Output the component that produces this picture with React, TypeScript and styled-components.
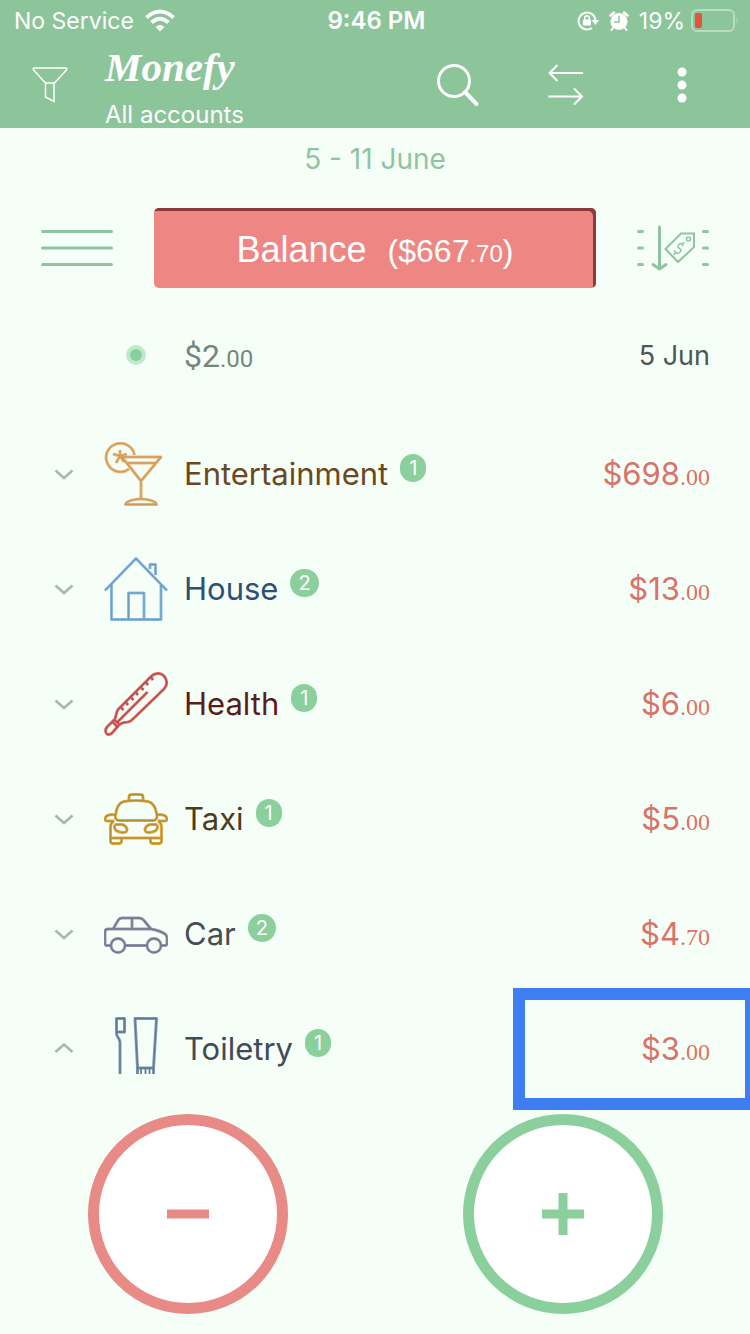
import React from "react";
import styled, { createGlobalStyle } from "styled-components";

const sans = `Inter, "Liberation Sans", sans-serif`;
const green = "#8bd09c";
const line = "#8fc4a1";
const paper = "#f5fff7";

const GlobalStyle = createGlobalStyle`
  * { box-sizing: border-box; }
  body { margin: 0; background: ${paper}; font-family: ${sans}; }
  button { padding: 0; border: 0; background: none; font: inherit; color: inherit; cursor: pointer; }
  svg { display: block; flex: none; }
`;

const Screen = styled.div`
  min-height: 100vh;
  display: flex;
  flex-direction: column;
  overflow: hidden;
`;

const Header = styled.header`
  background: #8cc59a;
  color: #fff;
`;

const StatusBar = styled.div`
  display: grid;
  grid-template-columns: 1fr auto 1fr;
  align-items: center;
  height: 41px;
  padding: 0 11px 0 14px;
  font-size: 23px;
`;

const StatusGroup = styled.div<{ $end?: boolean }>`
  display: flex;
  align-items: center;
  justify-content: ${(p) => (p.$end ? "flex-end" : "flex-start")};
  gap: 10px;
`;

const Battery = styled.div`
  display: flex;
  align-items: center;
  gap: 6px;
`;

const Clock = styled.time`
  font-size: 24px;
  font-weight: 600;
`;

const Toolbar = styled.div`
  display: flex;
  align-items: center;
  height: 87px;
  padding: 0 36px 0 26px;
`;

const ToolButton = styled.button<{ $wide?: boolean }>`
  display: flex;
  align-items: center;
  justify-content: center;
  width: ${(p) => (p.$wide ? 64 : 48)}px;
  height: 48px;
`;

const Titles = styled.div`
  flex: 1;
  padding-left: 31px;
`;

const Brand = styled.h1`
  margin: 0;
  font: italic 700 41px/60px "Liberation Serif", serif;
`;

const Account = styled.div`
  font-size: 24px;
  line-height: 36px;
`;

const Actions = styled.div`
  display: flex;
  gap: 60px;
`;

const Period = styled.h2`
  margin: 0;
  padding-top: 13px;
  font-size: 28px;
  font-weight: 400;
  line-height: 36px;
  text-align: center;
  color: ${line};
`;

const BalanceRow = styled.div`
  display: flex;
  align-items: center;
  gap: 40px;
  padding: 31px 40px 0;
`;

const BalanceButton = styled.button`
  display: flex;
  flex: 1;
  align-items: baseline;
  justify-content: center;
  gap: 21px;
  height: 80px;
  padding-top: 2px;
  border-radius: 5px;
  background: #ee8683;
  box-shadow: inset -3px 3px 0 #8c3a3b;
  color: #fff;
  font-family: "Liberation Sans", Arial, sans-serif;
  font-size: 36px;
  line-height: 80px;
`;

const BalanceAmount = styled.span`
  font-size: 32px;

  small { font-size: 24px; }
`;

const DayRow = styled.div`
  display: flex;
  align-items: center;
  height: 128px;
  padding: 6px 40px 0 126px;
  font-size: 27px;
  color: #4c5653;
`;

const Dot = styled.span`
  width: 20px;
  height: 20px;
  border: 4px solid #c0e9cb;
  border-radius: 50%;
  background: ${green};
`;

const DayAmount = styled.span`
  flex: 1;
  padding: 2px 0 0 38px;
  font-family: Roboto, sans-serif;
  font-size: 32px;
  color: #74877f;

  small { font-size: 24px; }
`;

const Categories = styled.ul`
  margin: 0;
  padding: 0;
  list-style: none;
`;

const CategoryRow = styled.li`
  position: relative;
  display: flex;
  align-items: center;
  height: 115px;
  padding: 0 40px;
`;

const Expander = styled.button`
  display: flex;
  align-items: center;
  justify-content: center;
  width: 48px;
  height: 48px;
  margin-right: 16px;
`;

const Name = styled.span<{ $color: string }>`
  padding-left: 16px;
  font-size: 31px;
  line-height: 40px;
  color: ${(p) => p.$color};
`;

const Badge = styled.span`
  min-width: 26px;
  margin: 0 auto 12px 12px;
  padding: 0 8px;
  border-radius: 14px;
  background: ${green};
  color: #fff;
  font-size: 20px;
  line-height: 28px;
  text-align: center;
`;

const Amount = styled.span`
  font-size: 31px;
  color: #d9736a;

  small { font-family: "Liberation Serif", serif; font-size: 24px; }
`;

const Highlight = styled.span`
  position: absolute;
  top: -3px;
  right: -7px;
  bottom: -4px;
  width: 244px;
  border: 12px solid #3f7df3;
  pointer-events: none;
`;

const Footer = styled.footer`
  display: grid;
  grid-template-columns: 1fr 1fr;
  justify-items: center;
  padding: 8px 0 20px;
`;

const RoundButton = styled.button<{ $color: string }>`
  display: flex;
  align-items: center;
  justify-content: center;
  width: 200px;
  height: 200px;
  border: 11px solid ${(p) => p.$color};
  border-radius: 50%;
  background: #fff;
  color: ${(p) => p.$color};
`;

/* Category drawings have a light outline with a darker core. */
function Drawing({ light, dark, children }: { light: string; dark: string; children: React.ReactNode }) {
  return (
    <svg width="64" height="64" viewBox="0 0 64 64" fill="none" strokeLinejoin="round" aria-hidden="true">
      <g stroke={light} strokeWidth="3">{children}</g>
      <g stroke={dark} strokeWidth="1.3">{children}</g>
    </svg>
  );
}

const Cocktail = () => (
  <Drawing light="#eab878" dark="#cf9a5c">
    <path d="M30.500 13A14.300 14.300 0 1 0 25 27" />
    <path d="M16 14V8M16 14l-7-2M16 14l-4 7M16 14l4 6M16 14l7-2" />
    <path d="M18 15H57L37 39ZM24 21H52M37 39V57" />
    <path d="M21.500 62.500C22 59 31 57 37 57S52 59 52.500 62.500Z" />
  </Drawing>
);

const House = () => (
  <Drawing light="#93bfe4" dark="#6c9cc6">
    <path d="M1 33.500L32 1.500L63 33.500M7.500 27V62.500H57V27M24.500 62.500V36H40V62.500M46 12V7.500H51.500V18" />
  </Drawing>
);

const Thermometer = () => (
  <Drawing light="#dc7570" dark="#b84c4c">
    <path d="M47 4.500C51 .5 57 .5 60 4S64 13 60 17L30 46C26 50 25 50 20 50.500C17 51 16 52 14 54L8.500 60.500C6.500 63 3.500 63 2.500 61.500S1 57.500 3 55L10.500 47.500C12.500 45 11.500 41 14 37.500Z" />
    <path d="M8.500 50L14 55.500M10.500 48L15 52" />
    <path d="M43.500 20L13 50.500" />
    <path d="M17 35.500L19.500 38M22 30.500L24 33M27 25.500L29.500 28M32 20.500L34 23M37 15.500L39.500 18M42 10.500L44 13M47 5.500L49 8" />
  </Drawing>
);

const Taxi = () => (
  <Drawing light="#e3b04b" dark="#b58d34">
    <path d="M25 13.500V10Q25 7.500 27.500 7.500H36.500Q39 7.500 39 10V13.500" />
    <path d="M11.500 28Q13 16 20 14.500Q32 12.500 44 14.500Q51 16 53 28Q53.500 33.500 49 33.500H15.500Q10.500 33.500 11.500 28Z" />
    <path d="M11.500 28.500Q9 27 5 28Q1 29 1 32.500Q1 34 4 34H10M52.500 28.500Q55 27 59 28Q63 29 63 32.500Q63 34 60 34H54" />
    <path d="M10 34Q6.500 36 6.500 40V51H57.500V40Q57.500 36 54 34M6.500 51V54Q6.500 56.500 9 56.500H15Q17.500 56.500 17.500 54V51M46.500 51V54Q46.500 56.500 49 56.500H55Q57.500 56.500 57.500 54V51" />
    <path d="M12 37.500H18Q22 38.500 23 42Q23.500 45.500 19 45.500Q11 45 10.500 40.500Q10.500 38 12 37.500ZM52 37.500H46Q42 38.500 41 42Q40.500 45.500 45 45.500Q53 45 53.500 40.500Q53.500 38 52 37.500Z" />
  </Drawing>
);

const Car = () => (
  <Drawing light="#9a9db4" dark="#72768f">
    <path d="M7 43.500H3Q1 43.500 1 41V30Q1 27 4 27H9L14 18.500Q15.500 16 18 16H35Q38 16 40 18.500L47 27Q57 29 61 32Q63 33.500 63 36V41Q63 43.500 61 43.500H57M21 43.500H43M9 27H47M28 16V27" />
    <circle cx="14" cy="43.500" r="7" />
    <circle cx="50" cy="43.500" r="7" />
  </Drawing>
);

const Toiletry = () => (
  <Drawing light="#849bb5" dark="#5f7a99">
    <path d="M12.500 15V1.500H20.500V15H12.500V17Q13 19 15 22Q16 24 16 26V57" />
    <path d="M31 1.500H52.500L49.500 51H33.500ZM33.500 51V57M49.500 51V57" />
    <path d="M37 51V57M41.500 51V57M45.500 51V57" strokeWidth="1.500" />
  </Drawing>
);

const Wifi = () => (
  <svg width="32" height="24" viewBox="0 0 32 24" fill="none" stroke="#fff" strokeWidth="4" aria-label="Wi-Fi" role="img">
    <path d="M2.500 8.500Q16-3.500 29.500 8.500M7.500 13.500Q16 6 24.500 13.500" />
    <path d="M16 22.500l-4.500-4.500q4.500-4 9 0z" fill="#fff" stroke="none" />
  </svg>
);

const RotationLock = () => (
  <svg width="22" height="22" viewBox="0 0 22 22" fill="none" aria-label="Rotation locked" role="img">
    <path d="M15 18A8.500 8.500 0 1 1 18.500 10" stroke="#fff" strokeWidth="2" />
    <path d="M14.500 10h7.500l-3.500 5z" fill="#fff" />
    <rect x="6" y="9.500" width="8" height="6" rx="1" fill="#fff" />
    <path d="M7.700 10V8a2.300 2.300 0 0 1 4.600 0v2" stroke="#fff" strokeWidth="1.500" />
  </svg>
);

const Alarm = () => (
  <svg width="20" height="20" viewBox="0 0 20 20" fill="none" stroke="#fff" strokeLinecap="round" aria-label="Alarm set" role="img">
    <circle cx="10" cy="10.500" r="8.500" fill="#fff" stroke="none" />
    <path d="M1.500 4.500L5 1.500M18.500 4.500L15 1.500" strokeWidth="2.500" />
    <path d="M4 17l-1.500 2M16 17l1.500 2" strokeWidth="2" />
    <path d="M10 5.500V11H5.500" stroke="#8cc59a" strokeWidth="1.500" />
  </svg>
);

const BatteryLevel = () => (
  <svg width="48" height="24" viewBox="0 0 48 24" fill="none" aria-hidden="true">
    <rect x="1" y="1" width="42" height="21" rx="5" stroke="#b9dcc2" strokeWidth="2" />
    <rect x="4" y="4" width="7" height="15" rx="2" fill="#e5533f" />
    <path d="M45.500 8q2 3.500 0 7z" fill="#b9dcc2" />
  </svg>
);

const Chevron = ({ up }: { up?: boolean }) => (
  <svg width="20" height="12" viewBox="0 0 20 12" fill="none" stroke="#a9b5ad" strokeWidth="2.500" aria-hidden="true">
    <path d={up ? "M1.500 9L10 1.500L18.500 9" : "M1.500 2.500L10 10L18.500 2.500"} />
  </svg>
);

const categories = [
  { name: "Entertainment", color: "#6b481f", count: 1, whole: "$698", cents: ".00", Icon: Cocktail },
  { name: "House", color: "#2f4f75", count: 2, whole: "$13", cents: ".00", Icon: House },
  { name: "Health", color: "#5c1c1c", count: 1, whole: "$6", cents: ".00", Icon: Thermometer },
  { name: "Taxi", color: "#4b3d1b", count: 1, whole: "$5", cents: ".00", Icon: Taxi },
  { name: "Car", color: "#474c55", count: 2, whole: "$4", cents: ".70", Icon: Car },
  { name: "Toiletry", color: "#414a59", count: 1, whole: "$3", cents: ".00", Icon: Toiletry, open: true, marked: true },
];

export default function App() {
  return (
    <Screen>
      <GlobalStyle />
      <Header>
        <StatusBar>
          <StatusGroup>
            <span>No Service</span>
            <Wifi />
          </StatusGroup>
          <Clock>9:46 PM</Clock>
          <StatusGroup $end>
            <RotationLock />
            <Alarm />
            <Battery>
              <span>19%</span>
              <BatteryLevel />
            </Battery>
          </StatusGroup>
        </StatusBar>
        <Toolbar>
          <ToolButton aria-label="Filter">
            <svg width="36" height="36" viewBox="0 0 36 36" fill="none" stroke="#fff" strokeWidth="1.500">
              <path d="M1.500 1H34.500V3L22.500 16H13.500L1.500 3ZM13.500 16V30L22 34.500V16" />
            </svg>
          </ToolButton>
          <Titles>
            <Brand>Monefy</Brand>
            <Account>All accounts</Account>
          </Titles>
          <Actions>
            <ToolButton aria-label="Search">
              <svg width="44" height="44" viewBox="0 0 44 44" fill="none" stroke="#fff" strokeLinecap="round">
                <circle cx="18" cy="18" r="15.500" strokeWidth="3" />
                <path d="M29 29L40.500 41" strokeWidth="4" />
              </svg>
            </ToolButton>
            <ToolButton aria-label="Transfer">
              <svg width="36" height="42" viewBox="0 0 36 42" fill="none" stroke="#fff" strokeWidth="2">
                <path d="M35 9H1.500M9.500 1L1.500 9L9.500 17M.5 32.500H34M26 24.500L34 32.500L26 40.500" />
              </svg>
            </ToolButton>
            <ToolButton $wide aria-label="More">
              <svg width="10" height="36" viewBox="0 0 10 36" fill="#fff">
                <circle cx="5" cy="5" r="4.500" />
                <circle cx="5" cy="18" r="4.500" />
                <circle cx="5" cy="31" r="4.500" />
              </svg>
            </ToolButton>
          </Actions>
        </Toolbar>
      </Header>

      <main>
        <Period>5 - 11 June</Period>
        <BalanceRow>
          <button aria-label="Menu">
            <svg width="74" height="48" viewBox="0 0 74 48" stroke={line} strokeWidth="3" strokeLinecap="round">
              <path d="M2.500 7.500H71.500M2.500 24H71.500M2.500 40.500H71.500" />
            </svg>
          </button>
          <BalanceButton>
            Balance
            <BalanceAmount>
              ($667<small>.70</small>)
            </BalanceAmount>
          </BalanceButton>
          <button aria-label="Sort by amount">
            <svg width="74" height="48" viewBox="0 0 74 48" fill="none" stroke={line} strokeWidth="3" strokeLinecap="round" strokeLinejoin="round">
              <path d="M2.500 7.500H6.500M2.500 24H6.500M2.500 40.500H6.500M67.500 7.500H71.500M67.500 24H71.500M67.500 40.500H71.500M23.500 3V45M17 40.500L23.500 45L30 40.500" />
              <path d="M29.500 25L45 9.500H58V23L42 38Z" strokeWidth="2" strokeLinejoin="miter" />
              <circle cx="52.500" cy="15" r="2" strokeWidth="1.500" />
              <path d="M47 21.500Q45.500 18 43 20.500T43.500 24.500T43.500 28.500T38.500 27M48 18.500L46 20.500M40 28L38 30.500" strokeWidth="1.500" />
            </svg>
          </button>
        </BalanceRow>
        <DayRow>
          <Dot />
          <DayAmount>
            $2<small>.00</small>
          </DayAmount>
          <time>5 Jun</time>
        </DayRow>
        <Categories>
          {categories.map(({ name, color, count, whole, cents, Icon, open, marked }) => (
            <CategoryRow key={name}>
              <Expander aria-label={name} aria-expanded={!!open}>
                <Chevron up={open} />
              </Expander>
              <Icon />
              <Name $color={color}>{name}</Name>
              <Badge>{count}</Badge>
              <Amount>
                {whole}
                <small>{cents}</small>
              </Amount>
              {marked && <Highlight />}
            </CategoryRow>
          ))}
        </Categories>
      </main>

      <Footer>
        <RoundButton $color="#e88a86" aria-label="Add expense">
          <svg width="42" height="42" viewBox="0 0 42 42" stroke="currentColor" strokeWidth="9">
            <path d="M0 21H42" />
          </svg>
        </RoundButton>
        <RoundButton $color={green} aria-label="Add income">
          <svg width="42" height="42" viewBox="0 0 42 42" stroke="currentColor" strokeWidth="9">
            <path d="M0 21H42M21 0V42" />
          </svg>
        </RoundButton>
      </Footer>
    </Screen>
  );
}
